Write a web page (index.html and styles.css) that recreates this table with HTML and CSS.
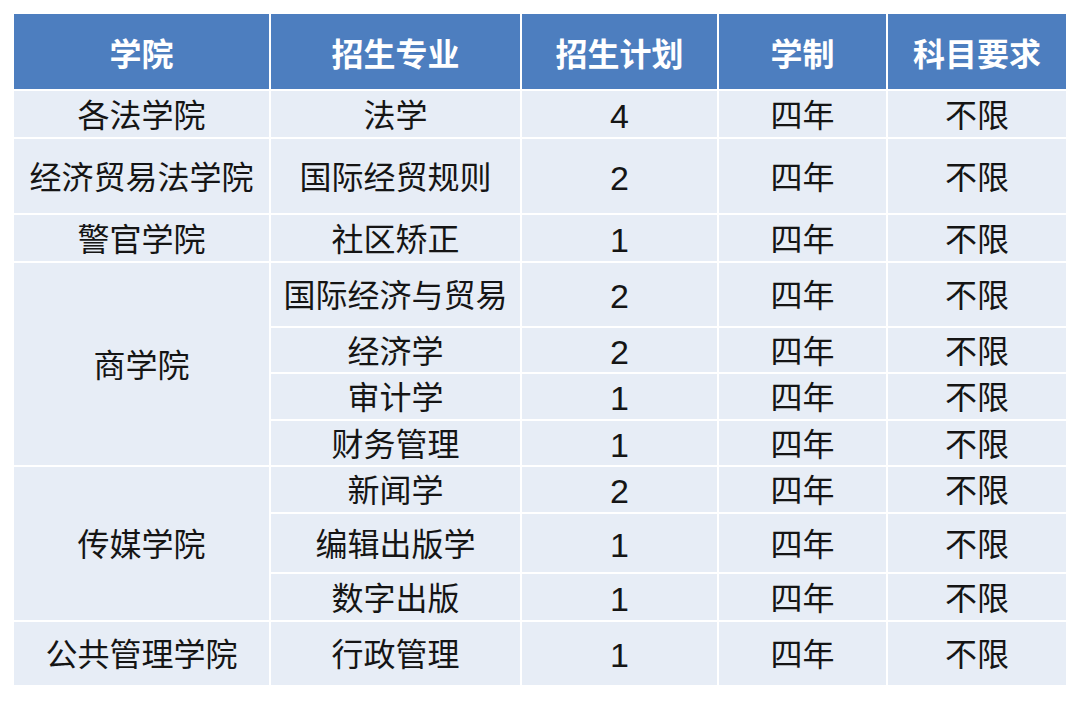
FILE: index.html
```html
<!DOCTYPE html>
<html lang="zh-CN">
<head>
<meta charset="utf-8">
<title>招生计划</title>
<link rel="stylesheet" href="styles.css">
</head>
<body>
<table class="plan">
  <colgroup>
    <col class="c1"><col class="c2"><col class="c3"><col class="c4"><col class="c5">
  </colgroup>
  <thead>
    <tr class="head"><th>学院</th><th>招生专业</th><th>招生计划</th><th>学制</th><th>科目要求</th></tr>
  </thead>
  <tbody>
    <tr class="r1"><td>各法学院</td><td>法学</td><td class="num">4</td><td>四年</td><td>不限</td></tr>
    <tr class="r2"><td>经济贸易法学院</td><td>国际经贸规则</td><td class="num">2</td><td>四年</td><td>不限</td></tr>
    <tr class="r3"><td>警官学院</td><td>社区矫正</td><td class="num">1</td><td>四年</td><td>不限</td></tr>
    <tr class="r4"><td rowspan="4">商学院</td><td>国际经济与贸易</td><td class="num">2</td><td>四年</td><td>不限</td></tr>
    <tr class="r5"><td>经济学</td><td class="num">2</td><td>四年</td><td>不限</td></tr>
    <tr class="r6"><td>审计学</td><td class="num">1</td><td>四年</td><td>不限</td></tr>
    <tr class="r7"><td>财务管理</td><td class="num">1</td><td>四年</td><td>不限</td></tr>
    <tr class="r8"><td rowspan="3">传媒学院</td><td>新闻学</td><td class="num">2</td><td>四年</td><td>不限</td></tr>
    <tr class="r9"><td>编辑出版学</td><td class="num">1</td><td>四年</td><td>不限</td></tr>
    <tr class="r10"><td>数字出版</td><td class="num">1</td><td>四年</td><td>不限</td></tr>
    <tr class="r11"><td>公共管理学院</td><td>行政管理</td><td class="num">1</td><td>四年</td><td>不限</td></tr>
  </tbody>
</table>
</body>
</html>
```
FILE: styles.css
```css
html, body {
  margin: 0;
  padding: 0;
  background: #ffffff;
}
body {
  padding: 12px 0 0 12px;
  font-family: "Liberation Sans", "Noto Sans CJK SC", sans-serif;
}
.plan {
  border-collapse: separate;
  border-spacing: 2px;
  table-layout: fixed;
  width: 1056px;
  background: #ffffff;
}
.c1 { width: 255px; }
.c2 { width: 249px; }
.c3 { width: 195px; }
.c4 { width: 167px; }
.c5 { width: 178px; }
.plan th, .plan td {
  padding: 0;
  text-align: center;
  vertical-align: middle;
  white-space: nowrap;
}
.plan th {
  background: #4d7ebf;
  color: #ffffff;
  font-weight: bold;
  font-size: 32px;
  height: 75px;
}
.plan td {
  background: #e7edf6;
  color: #151515;
  font-size: 32px;
  line-height: 1;
  padding-top: 3px;
}
.plan td.num {
  font-size: 34px;
}
.r1 td { height: 43px; }
.r2 td { height: 71px; }
.r3 td { height: 43px; }
.r4 td { height: 60px; }
.r5 td { height: 41px; }
.r6 td { height: 42px; }
.r7 td { height: 41px; }
.r8 td { height: 42px; }
.r9 td { height: 55px; }
.r10 td { height: 43px; }
.r11 td { height: 60px; }
```
